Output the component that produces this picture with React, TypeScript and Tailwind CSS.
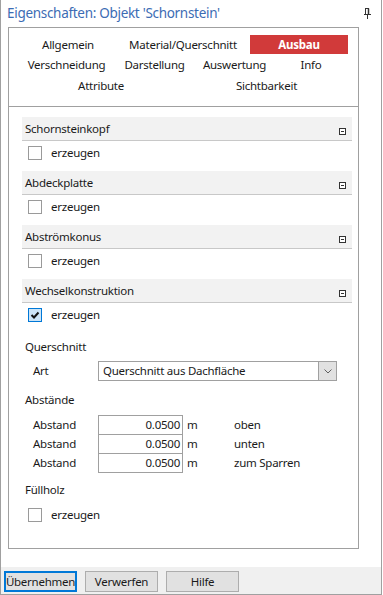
import React from "react";

const font = { fontFamily: '"Noto Sans", "Open Sans", sans-serif' };

const T = "text-[11.5px] tracking-[-0.25px] text-[#1a1a1a]";

function Minus() {
  return (
    <svg className="absolute right-[6px] top-[11px]" width="7" height="7" viewBox="0 0 7 7">
      <rect x="0.5" y="0.5" width="6" height="6" fill="white" stroke="#333" strokeWidth="1" />
      <line x1="2" y1="3.5" x2="5" y2="3.5" stroke="#333" strokeWidth="1" />
    </svg>
  );
}

function Header({ title }: { title: string }) {
  return (
    <div className={"relative h-[24px] bg-[#f2f2f2] border-b border-[#c8c8c8] flex items-center pl-[3px] " + T}>
      {title}
      <Minus />
    </div>
  );
}

function Check({ checked }: { checked?: boolean }) {
  return (
    <div className="flex items-center h-[14px] ml-[6px]">
      {checked ? (
        <div className="w-[14px] h-[14px] border border-[#0078d7] bg-[#cce4f7] flex items-center justify-center">
          <svg width="10" height="10" viewBox="0 0 10 10">
            <path d="M1.5 5 L4 7.5 L8.5 2.5" fill="none" stroke="#111" strokeWidth="2" />
          </svg>
        </div>
      ) : (
        <div className="w-[14px] h-[14px] border border-[#9a9a9a] bg-white" />
      )}
      <span className={"ml-[9px] " + T}>erzeugen</span>
    </div>
  );
}

function Section({ title, checked }: { title: string; checked?: boolean }) {
  return (
    <div>
      <Header title={title} />
      <div className="h-[30px] pt-[5px]">
        <Check checked={checked} />
      </div>
    </div>
  );
}

function AbstandRow({ label, last }: { label: string; last?: boolean }) {
  return (
    <div className={"flex h-[19px] items-stretch " + T}>
      <div className="w-[76px] pl-[11px] flex items-center">Abstand</div>
      <div
        className={
          "w-[85px] border-l border-r border-t border-[#a0a0a0] flex items-center justify-end pr-[2px] bg-white " +
          (last ? "border-b h-[20px]" : "")
        }
      >
        0.0500
      </div>
      <div className="w-[51px] pl-[4px] flex items-center">m</div>
      <div className="flex items-center">{label}</div>
    </div>
  );
}

export default function App() {
  return (
    <div className="w-[383px] h-[595px] bg-white" style={font}>
      <div className="w-[382px] h-[595px] border-l border-r border-b border-[#a0a0a0] flex flex-col">
        {/* title */}
        <div className="h-[27px] flex items-center justify-between pl-[6px] pr-[10px]">
          <span className="text-[13.5px] tracking-[-0.3px] text-[#3c6cb4]">Eigenschaften: Objekt 'Schornstein'</span>
          <svg width="7" height="11" viewBox="0 0 7 11">
            <rect x="1.5" y="0.5" width="3" height="6" fill="none" stroke="#333" strokeWidth="1" />
            <line x1="4.5" y1="0.5" x2="4.5" y2="6.5" stroke="#333" strokeWidth="1.5" />
            <line x1="0" y1="6.5" x2="7" y2="6.5" stroke="#333" strokeWidth="1" />
            <line x1="3.5" y1="7" x2="3.5" y2="11" stroke="#333" strokeWidth="1" />
          </svg>
        </div>

        {/* panel */}
        <div className="pl-[7px]">
          <div className="w-[351px] h-[522px] border border-[#a0a0a0] flex flex-col">
            {/* tabs */}
            <div className={"h-[79px] border-b border-[#a0a0a0] pt-[7px] " + T}>
              <div className="flex h-[20px] pl-[11px]">
                <div className="w-[96px] flex items-center justify-center">Allgemein</div>
                <div className="w-[118px] ml-[8px] flex items-center justify-center">Material/Querschnitt</div>
                <div className="w-[98px] ml-[8px] h-[19px] bg-[#d13a3a] text-white font-bold flex items-center justify-center">
                  Ausbau
                </div>
              </div>
              <div className="flex h-[20px] pl-[11px]">
                <div className="w-[93px] flex items-center justify-center">Verschneidung</div>
                <div className="w-[75px] ml-[4px] flex items-center justify-center">Darstellung</div>
                <div className="w-[75px] ml-[5px] flex items-center justify-center">Auswertung</div>
                <div className="w-[70px] ml-[4px] flex items-center justify-center">Info</div>
              </div>
              <div className="flex h-[21px] pl-[11px]">
                <div className="w-[162px] flex items-center justify-center">Attribute</div>
                <div className="w-[169px] flex items-center justify-center">Sichtbarkeit</div>
              </div>
            </div>

            {/* content */}
            <div className="pl-[13px] pr-[6px] pt-[10px]">
              <Section title="Schornsteinkopf" />
              <Section title="Abdeckplatte" />
              <Section title="Abströmkonus" />
              <Section title="Wechselkonstruktion" checked />

              <div className={"h-[28px] flex items-center pl-[3px] " + T}>Querschnitt</div>
              <div className={"flex h-[20px] items-stretch " + T}>
                <div className="w-[76px] pl-[11px] flex items-center">Art</div>
                <div className="w-[239px] border border-[#a0a0a0] flex items-stretch bg-white">
                  <div className="flex-1 flex items-center pl-[4px]">Querschnitt aus Dachfläche</div>
                  <div className="w-[18px] border-l border-[#a0a0a0] bg-[#e1e1e1] flex items-center justify-center">
                    <svg width="8" height="5" viewBox="0 0 8 5">
                      <path d="M0.5 0.5 L4 4 L7.5 0.5" fill="none" stroke="#606060" strokeWidth="1" />
                    </svg>
                  </div>
                </div>
              </div>

              <div className={"h-[34px] pt-[4px] flex items-center pl-[3px] " + T}>Abstände</div>
              <AbstandRow label="oben" />
              <AbstandRow label="unten" />
              <AbstandRow label="zum Sparren" last />

              <div className={"h-[32px] pt-[4px] flex items-center pl-[3px] " + T}>Füllholz</div>
              <div className="pt-[4px]">
                <Check />
              </div>
            </div>
          </div>
        </div>

        <div className="h-[18px]" />

        {/* footer */}
        <div className={"h-[27px] bg-[#f0f0f0] pt-[4px] pl-[3px] flex gap-[8px] " + T}>
          <div className="w-[73px] h-[21px] border-2 border-[#0078d7] bg-[#e1e1e1] flex items-center justify-center">
            Übernehmen
          </div>
          <div className="w-[73px] h-[21px] border border-[#adadad] bg-[#e1e1e1] flex items-center justify-center">
            Verwerfen
          </div>
          <div className="w-[73px] h-[21px] border border-[#adadad] bg-[#e1e1e1] flex items-center justify-center">
            Hilfe
          </div>
        </div>
      </div>
    </div>
  );
}
